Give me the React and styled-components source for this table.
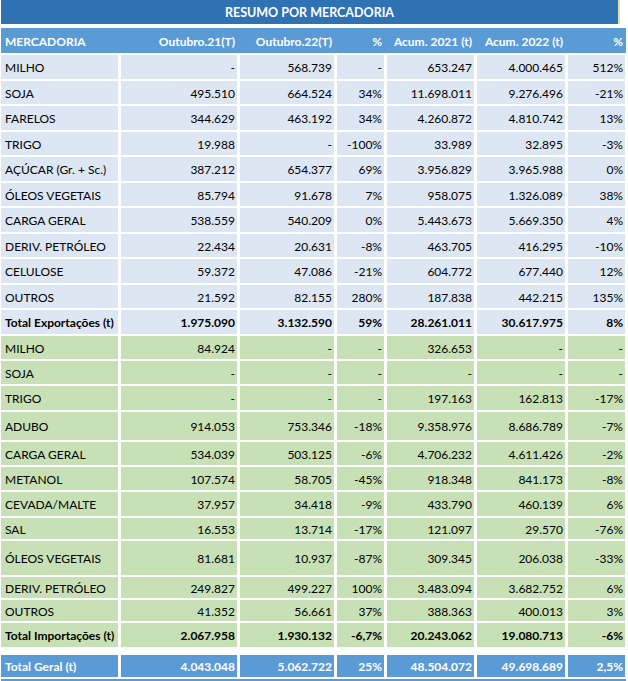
import React from 'react'
import styled, { createGlobalStyle } from 'styled-components'

const GlobalStyle = createGlobalStyle`
    body {
        margin: 0;
        background: #ffffff;
        font-family: Lato, "Liberation Sans", sans-serif;
    }
`

const COLS = '117px 116px 94px 47px 87px 88px 57px'

const Page = styled.div`
    width: 628px;
    height: 681px;
    overflow: hidden;
    padding-left: 1px;
    box-sizing: border-box;
`

const TitleBar = styled.div`
    width: 619px;
    height: 24px;
    background: #2e72b4;
    border-right: 2px solid #e9e39a;
    color: #ffffff;
    font-weight: 700;
    font-size: 12.5px;
    display: flex;
    align-items: center;
    justify-content: center;
    padding-top: 1px;
    box-sizing: border-box;
`

const Header = styled.div`
    margin-top: 4px;
    width: 625px;
    height: 25px;
    padding-top: 2px;
    box-sizing: border-box;
    background: #5b9bd5;
    display: grid;
    grid-template-columns: ${COLS};
    column-gap: 3px;
    align-items: center;
    color: #ffffff;
    font-weight: 700;
    font-size: 12px;
`

const HeadCell = styled.div`
    text-align: ${p => (p.$left ? 'left' : 'right')};
    padding: ${p => (p.$left ? '0 0 0 4px' : '0 2px 0 0')};
    white-space: nowrap;
`

const Body = styled.div`
    margin-top: 2px;
    display: flex;
    flex-direction: column;
    row-gap: 2px;
`

const Row = styled.div`
    display: grid;
    grid-template-columns: ${COLS};
    column-gap: 3px;
    height: ${p => p.$h}px;
    margin-top: ${p => p.$mt || 0}px;
`

const palette = {
    exp: { bg: '#dde7f3', fg: '#000000' },
    imp: { bg: '#c7e0b5', fg: '#000000' },
    total: { bg: '#5b9bd5', fg: '#ffffff' },
}

const Cell = styled.div`
    background: ${p => palette[p.$kind].bg};
    color: ${p => palette[p.$kind].fg};
    font-weight: ${p => (p.$bold ? 700 : 400)};
    font-size: 12px;
    display: flex;
    align-items: center;
    justify-content: ${p => (p.$left ? 'flex-start' : 'flex-end')};
    padding: ${p => (p.$left ? '2px 0 0 4px' : '2px 2px 0 0')};
    box-sizing: border-box;
    white-space: nowrap;
    overflow: hidden;
`

const BottomEdge = styled.div`
    margin-top: 2px;
    width: 625px;
    height: 4px;
    background: #5b9bd5;
`

const exports_ = [
    ['MILHO', '-', '568.739', '-', '653.247', '4.000.465', '512%'],
    ['SOJA', '495.510', '664.524', '34%', '11.698.011', '9.276.496', '-21%'],
    ['FARELOS', '344.629', '463.192', '34%', '4.260.872', '4.810.742', '13%'],
    ['TRIGO', '19.988', '-', '-100%', '33.989', '32.895', '-3%'],
    ['AÇÚCAR (Gr. + Sc.)', '387.212', '654.377', '69%', '3.956.829', '3.965.988', '0%'],
    ['ÓLEOS VEGETAIS', '85.794', '91.678', '7%', '958.075', '1.326.089', '38%'],
    ['CARGA GERAL', '538.559', '540.209', '0%', '5.443.673', '5.669.350', '4%'],
    ['DERIV. PETRÓLEO', '22.434', '20.631', '-8%', '463.705', '416.295', '-10%'],
    ['CELULOSE', '59.372', '47.086', '-21%', '604.772', '677.440', '12%'],
    ['OUTROS', '21.592', '82.155', '280%', '187.838', '442.215', '135%'],
]

const imports_ = [
    [23, 'MILHO', '84.924', '-', '-', '326.653', '-', '-'],
    [23, 'SOJA', '-', '-', '-', '-', '-', '-'],
    [24, 'TRIGO', '-', '-', '-', '197.163', '162.813', '-17%'],
    [28, 'ADUBO', '914.053', '753.346', '-18%', '9.358.976', '8.686.789', '-7%'],
    [23, 'CARGA GERAL', '534.039', '503.125', '-6%', '4.706.232', '4.611.426', '-2%'],
    [23, 'METANOL', '107.574', '58.705', '-45%', '918.348', '841.173', '-8%'],
    [24, 'CEVADA/MALTE', '37.957', '34.418', '-9%', '433.790', '460.139', '6%'],
    [21, 'SAL', '16.553', '13.714', '-17%', '121.097', '29.570', '-76%'],
    [34, 'ÓLEOS VEGETAIS', '81.681', '10.937', '-87%', '309.345', '206.038', '-33%'],
    [21, 'DERIV. PETRÓLEO', '249.827', '499.227', '100%', '3.483.094', '3.682.752', '6%'],
    [21, 'OUTROS', '41.352', '56.661', '37%', '388.363', '400.013', '3%'],
]

const headers = ['MERCADORIA', 'Outubro.21(T)', 'Outubro.22(T)', '%', 'Acum. 2021 (t)', 'Acum. 2022 (t)', '%']

function DataRow({ values, kind, bold, h, mt }) {
    return (
        <Row $h={h} $mt={mt}>
            {values.map((v, i) => (
                <Cell key={i} $kind={kind} $bold={bold} $left={i === 0}>
                    {v}
                </Cell>
            ))}
        </Row>
    )
}

export default function App() {
    return (
        <Page>
            <GlobalStyle />
            <TitleBar>RESUMO POR MERCADORIA</TitleBar>
            <Header>
                {headers.map((h, i) => (
                    <HeadCell key={i} $left={i === 0}>{h}</HeadCell>
                ))}
            </Header>
            <Body>
                {exports_.map((r, i) => (
                    <DataRow key={'e' + i} values={r} kind="exp" h={23.5} />
                ))}
                <DataRow
                    values={['Total Exportações (t)', '1.975.090', '3.132.590', '59%', '28.261.011', '30.617.975', '8%']}
                    kind="exp"
                    bold
                    h={23.5}
                />
                {imports_.map(([h, ...r], i) => (
                    <DataRow key={'i' + i} values={r} kind="imp" h={h} />
                ))}
                <DataRow
                    values={['Total Importações (t)', '2.067.958', '1.930.132', '-6,7%', '20.243.062', '19.080.713', '-6%']}
                    kind="imp"
                    bold
                    h={24}
                />
                <DataRow
                    values={['Total Geral (t)', '4.043.048', '5.062.722', '25%', '48.504.072', '49.698.689', '2,5%']}
                    kind="total"
                    bold
                    h={22}
                    mt={6}
                />
            </Body>
            <BottomEdge />
        </Page>
    )
}
